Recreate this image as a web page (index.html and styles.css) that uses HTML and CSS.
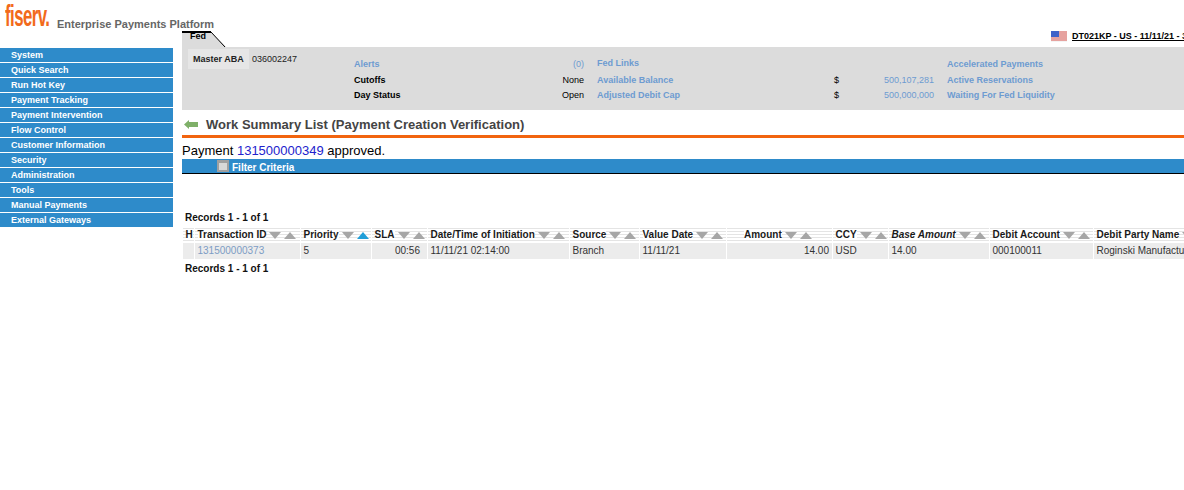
FILE: index.html
```html
<!DOCTYPE html>
<html lang="en">

<head>
  <meta charset="UTF-8">
  <title>Work Summary List</title>
  <link rel="stylesheet" href="styles.css">
</head>

<body>
  <div id="page">
    <div id="top">
      <div id="brand">
        <span id="logo">fiserv.</span>
        <span id="product">Enterprise Payments Platform</span>
      </div>
      <div id="session">
        <svg class="flag" width="16" height="11" viewBox="0 0 16 11">
          <rect width="16" height="11" fill="#f4f4f4" />
          <path d="M0 1h16M0 3h16M0 5h16M0 7h16M0 9h16" stroke="#d8504a" stroke-width="1" />
          <rect width="8" height="6" fill="#3f62c8" />
        </svg>
        <span class="session-text">DT021KP - US - 11/11/21 - 3:14 PM</span>
      </div>
    </div>

    <div id="body-row">
      <div id="sidebar">
        <a>System</a>
        <a>Quick Search</a>
        <a>Run Hot Key</a>
        <a>Payment Tracking</a>
        <a>Payment Intervention</a>
        <a>Flow Control</a>
        <a>Customer Information</a>
        <a>Security</a>
        <a>Administration</a>
        <a>Tools</a>
        <a>Manual Payments</a>
        <a>External Gateways</a>
      </div>

      <div id="main">
        <div id="tab-strip">
          <div id="tab">Fed</div>
          <svg id="tab-corner" width="15" height="15" viewBox="0 0 15 15">
            <path d="M0 0L15 15H0Z" fill="#dcdcdc" />
            <path d="M0 0L14 15" stroke="#000" stroke-width="1" fill="none" />
          </svg>
        </div>

        <div id="info">
          <div id="aba">
            <span class="aba-label">Master ABA</span>
            <span>036002247</span>
          </div>
          <div id="stats">
            <span class="link">Alerts</span><span class="num link">(0)</span><span class="link pad fed">Fed Links</span><span></span><span></span><span class="link pad">Accelerated Payments</span>
            <span class="strong">Cutoffs</span><span class="num">None</span><span class="link pad">Available Balance</span><span>$</span><span class="num link">500,107,281</span><span class="link pad">Active Reservations</span>
            <span class="strong">Day Status</span><span class="num">Open</span><span class="link pad">Adjusted Debit Cap</span><span>$</span><span class="num link">500,000,000</span><span class="link pad">Waiting For Fed Liquidity</span>
          </div>
        </div>

        <div id="heading">
          <svg width="14" height="9" viewBox="0 0 14 9">
            <path d="M0 4.5L5 0V2H14V7H5V9Z" fill="#7fb069" />
          </svg>
          <h1>Work Summary List (Payment Creation Verification)</h1>
        </div>

        <div id="message">Payment <a>131500000349</a> approved.</div>

        <div id="filter">
          <span id="filter-icon"></span>
          <span class="filter-label">Filter Criteria</span>
        </div>

        <div class="records">Records 1 - 1 of 1</div>

        <table id="list">
          <colgroup>
            <col class="c-h"><col class="c-id"><col class="c-pri"><col class="c-sla"><col class="c-date"><col class="c-src"><col class="c-val"><col class="c-amt"><col class="c-ccy"><col class="c-base"><col class="c-acc"><col class="c-party">
          </colgroup>
          <thead>
            <tr>
              <th><span class="lbl">H</span></th>
              <th><span class="lbl">Transaction ID</span><i class="dn"></i><i class="up"></i></th>
              <th><span class="lbl">Priority</span><i class="dn"></i><i class="up on"></i></th>
              <th><span class="lbl">SLA</span><i class="dn"></i><i class="up"></i></th>
              <th><span class="lbl">Date/Time of Initiation</span><i class="dn"></i><i class="up"></i></th>
              <th><span class="lbl">Source</span><i class="dn"></i><i class="up"></i></th>
              <th><span class="lbl">Value Date</span><i class="dn"></i><i class="up"></i></th>
              <th class="th-right"><span class="lbl">Amount</span><i class="dn"></i><i class="up"></i></th>
              <th><span class="lbl">CCY</span><i class="dn"></i><i class="up"></i></th>
              <th><span class="lbl em">Base Amount</span><i class="dn"></i><i class="up"></i></th>
              <th><span class="lbl">Debit Account</span><i class="dn"></i><i class="up"></i></th>
              <th><span class="lbl">Debit Party Name</span><i class="dn"></i><i class="up"></i></th>
            </tr>
          </thead>
          <tbody>
            <tr>
              <td></td>
              <td class="id-cell"><a>131500000373</a></td>
              <td>5</td>
              <td class="right sla">00:56</td>
              <td>11/11/21 02:14:00</td>
              <td>Branch</td>
              <td>11/11/21</td>
              <td class="right">14.00</td>
              <td>USD</td>
              <td>14.00</td>
              <td>000100011</td>
              <td>Roginski Manufacturing</td>
            </tr>
          </tbody>
        </table>

        <div class="records bottom">Records 1 - 1 of 1</div>
      </div>
    </div>
  </div>
</body>

</html>
```

FILE: styles.css
```css
* {
  box-sizing: border-box;
}

html,
body {
  margin: 0;
  height: 100%;
  background: #fff;
  overflow: hidden;
}

body {
  font-family: "Liberation Sans", Arial, sans-serif;
  font-size: 10px;
  color: #000;
}

#page {
  width: 1184px;
  height: 490px;
  overflow: hidden;
}

/* top row */
#top {
  height: 30px;
  position: relative;
}

#brand {
  display: flex;
  align-items: flex-start;
  height: 30px;
  padding-left: 5px;
}

#logo {
  display: inline-block;
  width: 44px;
  margin-top: 1px;
  font-size: 30px;
  font-weight: bold;
  line-height: 30px;
  color: #f26a1b;
  letter-spacing: -1px;
  transform: scaleX(0.56);
  transform-origin: left bottom;
  white-space: nowrap;
}

#product {
  margin: 18px 0 0 8px;
  font-size: 11px;
  font-weight: bold;
  color: #666;
  line-height: 13px;
  white-space: nowrap;
}

#session {
  position: absolute;
  top: 30px;
  left: 1051px;
  display: flex;
  align-items: center;
  gap: 5px;
  white-space: nowrap;
}

.session-text {
  font-size: 9px;
  font-weight: bold;
  text-decoration: underline;
  line-height: 12px;
}

.flag {
  flex: none;
}

/* sidebar and main */
#body-row {
  display: flex;
}

#sidebar {
  width: 173px;
  margin: 18px 9px 0 0;
  flex: none;
  display: flex;
  flex-direction: column;
  gap: 1px;
}

#sidebar a {
  height: 14px;
  padding-left: 11px;
  background: #2e8bca;
  color: #fff;
  font-size: 9px;
  font-weight: bold;
  line-height: 14px;
}

#main {
  width: 1002px;
  flex: none;
  overflow: hidden;
}

#tab-strip {
  display: flex;
  align-items: flex-end;
  height: 17px;
}

#tab {
  width: 29px;
  height: 16px;
  padding-left: 8px;
  background: #dcdcdc;
  border-top: 2px solid #000;
  font-size: 9px;
  font-weight: bold;
  line-height: 7px;
  overflow: hidden;
}

#tab-corner {
  flex: none;
}

#info {
  display: flex;
  height: 63px;
  background: #dcdcdc;
  font-size: 9px;
}

#aba {
  display: flex;
  align-self: flex-start;
  align-items: center;
  flex: none;
  width: 166px;
  margin: 2px 0 0 6px;
  gap: 3px;
  color: #222;
}

.aba-label {
  width: 61px;
  height: 20px;
  padding-left: 5px;
  background: #e6e6e6;
  font-weight: bold;
  line-height: 20px;
  white-space: nowrap;
}

#stats {
  flex: 1;
  display: grid;
  grid-template-columns: 190px 40px 250px 50px 50px 1fr;
  grid-template-rows: 16px 15px 15px;
  padding-top: 9px;
  align-items: center;
}

#stats span {
  white-space: nowrap;
}

.link {
  color: #6d9bd1;
  font-weight: bold;
}

.pad {
  padding-left: 13px;
}

.strong {
  font-weight: bold;
}

#stats .num {
  justify-self: end;
  font-weight: normal;
}

#stats .fed {
  margin-top: -2px;
}

#heading {
  display: flex;
  align-items: center;
  gap: 8px;
  height: 28px;
  padding: 3px 0 0 2px;
  border-bottom: 3px solid #f2640f;
}

h1 {
  margin: 0;
  font-size: 13px;
  font-weight: bold;
  color: #444;
}

#message {
  height: 21px;
  padding-top: 5px;
  font-size: 13px;
  line-height: 16px;
}

#message a {
  color: #2222cc;
}

#filter {
  display: flex;
  align-items: center;
  gap: 3px;
  height: 15px;
  padding-left: 35px;
  background: #2e8bca;
  border-bottom: 1px solid #000;
  color: #fff;
  font-weight: bold;
}

.filter-label {
  margin-top: 4px;
  line-height: 14px;
}

#filter-icon {
  width: 12px;
  height: 12px;
  background: #d8d8d8;
  border: 2px solid #a0a0a0;
  border-top-width: 3px;
}

.records {
  padding: 38px 0 0 3px;
  height: 53px;
  font-weight: bold;
  line-height: 12px;
  color: #111;
}

.records.bottom {
  height: auto;
  padding-top: 3px;
}

/* list table */
#list {
  table-layout: fixed;
  border-collapse: separate;
  border-spacing: 1px;
  width: 1053px;
  margin: 0;
}

.c-h { width: 11px; }
.c-id { width: 105px; }
.c-pri { width: 70px; }
.c-sla { width: 55px; }
.c-date { width: 141px; }
.c-src { width: 69px; }
.c-val { width: 86px; }
.c-amt { width: 105px; }
.c-ccy { width: 55px; }
.c-base { width: 100px; }
.c-acc { width: 103px; }
.c-party { width: 140px; }

#list th {
  height: 14px;
  padding: 0 0 1px 2.5px;
  text-align: left;
  white-space: nowrap;
  overflow: hidden;
  font-size: 10px;
  line-height: 13px;
  background: repeating-linear-gradient(#e4e4e4 0 1px, #fff 1px 3px);
}

#list th.th-right {
  padding-left: 17px;
}

.lbl {
  background: #fff;
  color: #1a1a1a;
}

.em {
  font-style: italic;
}

#list td {
  height: 16px;
  padding: 0 3px 1px 2.5px;
  background: #ececec;
  font-size: 10px;
  color: #333;
  white-space: nowrap;
  overflow: hidden;
}

#list td.right {
  text-align: right;
}

#list td.sla {
  padding-right: 7px;
}

.id-cell a {
  color: #7d9cc4;
}

/* sort arrows */
.dn,
.up {
  display: inline-block;
  width: 0;
  height: 0;
  margin-left: 3px;
  border-left: 6.5px solid transparent;
  border-right: 6.5px solid transparent;
  vertical-align: -1px;
}

.dn {
  border-top: 7px solid #a6a6a6;
}

.up {
  border-bottom: 7px solid #a6a6a6;
}

.up.on {
  border-bottom-color: #1f9ed8;
}
```
